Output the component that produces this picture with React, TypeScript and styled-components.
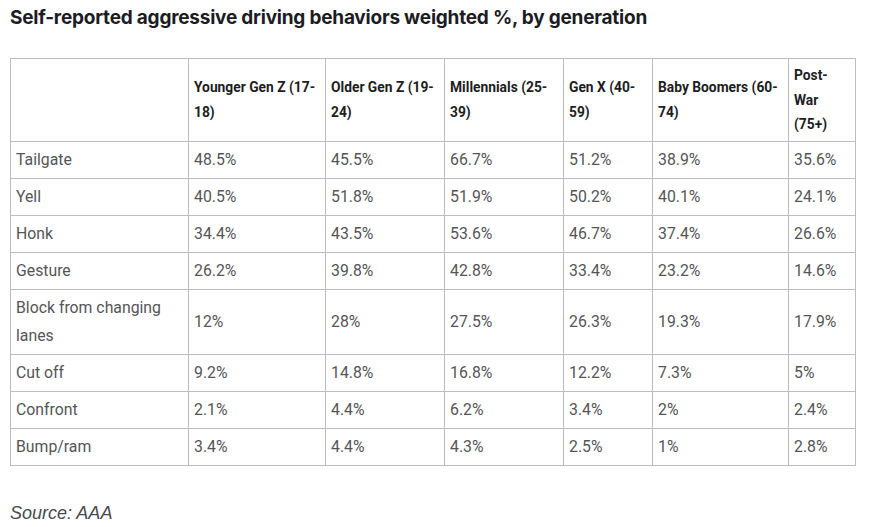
import React from "react";
import styled, { createGlobalStyle } from "styled-components";

const Global = createGlobalStyle`
  html, body { margin: 0; padding: 0; background: #ffffff; }
  body { font-family: Roboto, "Liberation Sans", Arial, sans-serif; }
`;

const Page = styled.main`
  padding: 0 10px;
  width: 869px;
  box-sizing: border-box;
`;

const Title = styled.h2`
  margin: 0;
  padding-top: 6px;
  font-family: Inter, "Noto Sans", sans-serif;
  font-weight: 700;
  font-size: 19px;
  line-height: 24px;
  color: #1c1c24;
  letter-spacing: -0.22px;
`;

const Table = styled.table`
  margin-top: 28px;
  border-collapse: collapse;
  table-layout: fixed;
  width: 845px;
  border: 1px solid #b9bdcb;
`;

const HeadCell = styled.th`
  border: 1px solid #b9bdcb;
  padding: 4px 5px;
  text-align: left;
  vertical-align: middle;
  font-family: Roboto, "Liberation Sans", sans-serif;
  font-weight: 700;
  font-size: 13.8px;
  line-height: 24.7px;
  color: #1d1d22;
`;

const Cell = styled.td`
  border: 1px solid #b9bdcb;
  padding: 4px 5px;
  text-align: left;
  vertical-align: middle;
  font-family: Roboto, "Liberation Sans", sans-serif;
  font-size: 15.8px;
  line-height: 28px;
  color: #555558;
`;

const Source = styled.p`
  margin: 35px 0 0;
  font-family: "Liberation Sans", Arial, sans-serif;
  font-style: italic;
  font-size: 18px;
  line-height: 24px;
  color: #4a4a50;
`;

const colWidths = [178, 137, 119, 119, 89, 136, 67];

const headers = [
  "",
  "Younger Gen Z (17-18)",
  "Older Gen Z (19-24)",
  "Millennials (25-39)",
  "Gen X (40-59)",
  "Baby Boomers (60-74)",
  "Post-War (75+)",
];

const rows: string[][] = [
  ["Tailgate", "48.5%", "45.5%", "66.7%", "51.2%", "38.9%", "35.6%"],
  ["Yell", "40.5%", "51.8%", "51.9%", "50.2%", "40.1%", "24.1%"],
  ["Honk", "34.4%", "43.5%", "53.6%", "46.7%", "37.4%", "26.6%"],
  ["Gesture", "26.2%", "39.8%", "42.8%", "33.4%", "23.2%", "14.6%"],
  ["Block from changing lanes", "12%", "28%", "27.5%", "26.3%", "19.3%", "17.9%"],
  ["Cut off", "9.2%", "14.8%", "16.8%", "12.2%", "7.3%", "5%"],
  ["Confront", "2.1%", "4.4%", "6.2%", "3.4%", "2%", "2.4%"],
  ["Bump/ram", "3.4%", "4.4%", "4.3%", "2.5%", "1%", "2.8%"],
];

export default function App() {
  return (
    <>
      <Global />
      <Page>
        <Title>Self-reported aggressive driving behaviors weighted %, by generation</Title>
        <Table>
          <colgroup>
            {colWidths.map((w, i) => (
              <col key={i} style={{ width: w }} />
            ))}
          </colgroup>
          <thead>
            <tr>
              {headers.map((h, i) => (
                <HeadCell key={i}>{h}</HeadCell>
              ))}
            </tr>
          </thead>
          <tbody>
            {rows.map((r, ri) => (
              <tr key={ri}>
                {r.map((c, ci) => (
                  <Cell key={ci}>{c}</Cell>
                ))}
              </tr>
            ))}
          </tbody>
        </Table>
        <Source>Source: AAA</Source>
      </Page>
    </>
  );
}
